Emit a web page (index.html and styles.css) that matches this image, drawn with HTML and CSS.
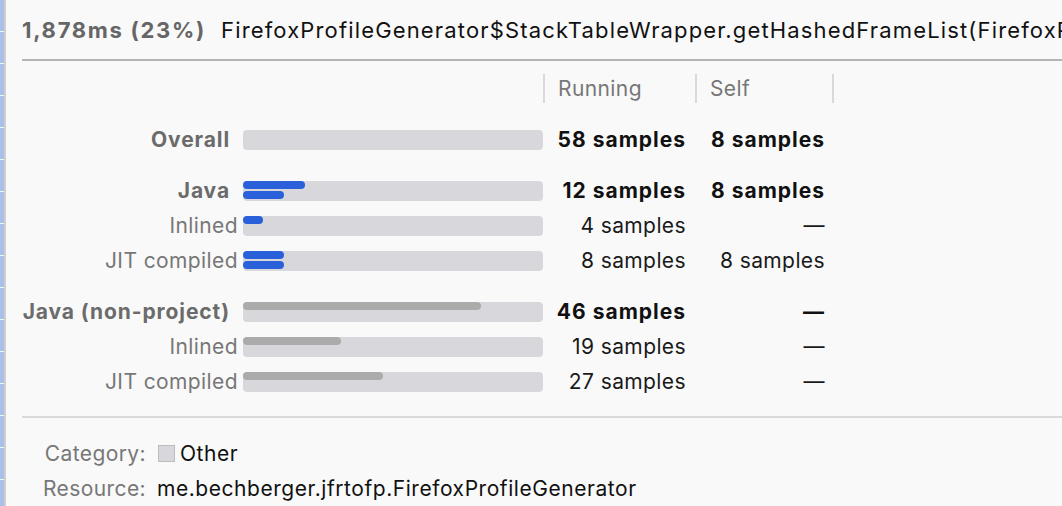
FILE: index.html
```html
<!DOCTYPE html>
<html>
<head>
<meta charset="utf-8">
<link rel="stylesheet" href="styles.css">
</head>
<body>
<div class="strip"></div>
<div class="panel">
  <div class="title">
    <span class="title-time">1,878ms (23%)</span><span class="title-name">FirefoxProfileGenerator$StackTableWrapper.getHashedFrameList(FirefoxProfileGenerator.java)</span>
  </div>
  <div class="table">
    <div class="row head">
      <div></div>
      <div></div>
      <div class="hdr">Running</div>
      <div class="hdr hdr-last">Self</div>
    </div>

    <div class="group">
      <div class="row">
        <div class="label bold">Overall</div>
        <div class="bar"></div>
        <div class="val bold">58 samples</div>
        <div class="val bold">8 samples</div>
      </div>
    </div>

    <div class="group">
      <div class="row">
        <div class="label bold">Java</div>
        <div class="bar"><div class="sub top blue" style="width:62px"></div><div class="sub bot blue" style="width:41px"></div></div>
        <div class="val bold">12 samples</div>
        <div class="val bold">8 samples</div>
      </div>
      <div class="row">
        <div class="label">Inlined</div>
        <div class="bar"><div class="sub top blue" style="width:20px"></div></div>
        <div class="val">4 samples</div>
        <div class="val">—</div>
      </div>
      <div class="row">
        <div class="label">JIT compiled</div>
        <div class="bar"><div class="sub top blue" style="width:41px"></div><div class="sub bot blue" style="width:41px"></div></div>
        <div class="val">8 samples</div>
        <div class="val">8 samples</div>
      </div>
    </div>

    <div class="group">
      <div class="row">
        <div class="label bold">Java (non-project)</div>
        <div class="bar"><div class="sub top grey" style="width:238px"></div></div>
        <div class="val bold">46 samples</div>
        <div class="val bold">—</div>
      </div>
      <div class="row">
        <div class="label">Inlined</div>
        <div class="bar"><div class="sub top grey" style="width:98px"></div></div>
        <div class="val">19 samples</div>
        <div class="val">—</div>
      </div>
      <div class="row">
        <div class="label">JIT compiled</div>
        <div class="bar"><div class="sub top grey" style="width:140px"></div></div>
        <div class="val">27 samples</div>
        <div class="val">—</div>
      </div>
    </div>
  </div>
  <div class="details">
    <div class="dlabel">Category:</div>
    <div class="dval"><span class="swatch"></span>Other</div>
    <div class="dlabel">Resource:</div>
    <div class="dval">me.bechberger.jfrtofp.FirefoxProfileGenerator</div>
  </div>
</div>
</body>
</html>
```
FILE: styles.css
```css
html, body {
  margin: 0;
  padding: 0;
  height: 100%;
}
body {
  display: flex;
  background: #f9f9f9;
  font-family: Inter, "Noto Sans", sans-serif;
  font-size: 21px;
  letter-spacing: 0.4px;
  overflow: hidden;
}
.strip {
  width: 4px;
  flex: none;
  background: repeating-linear-gradient(to bottom, #a9c0e8 0, #a9c0e8 31px, #f0f4fb 31px, #f0f4fb 32px);
  border-right: 2px solid #cfcfcf;
}
.panel {
  flex: 1;
  min-width: 0;
  padding-left: 16px;
}
.title {
  height: 61px;
  box-sizing: border-box;
  padding-top: 17px;
  white-space: nowrap;
  overflow: hidden;
  border-bottom: 2px solid #b4b4b4;
  font-size: 22px;
  letter-spacing: 1.15px;
}
.title-time {
  font-weight: 700;
  color: #666;
  margin-right: 15px;
  letter-spacing: 1.7px;
}
.title-name {
  color: #111;
}
.table {
  display: flex;
  flex-direction: column;
  gap: 16px;
  margin-top: 13px;
}
.group {
  display: flex;
  flex-direction: column;
}
.row {
  display: grid;
  grid-template-columns: 221px 300px 152px 139px;
  height: 35px;
  align-items: center;
}
.row.head {
  height: 29px;
  margin-bottom: 3px;
}
.hdr {
  height: 29px;
  border-left: 2px solid #d9d9d9;
  padding-left: 13px;
  color: #777;
  line-height: 29px;
}
.hdr-last {
  border-right: 2px solid #d9d9d9;
}
.label {
  text-align: right;
  padding-right: 5px;
  color: #777;
  white-space: nowrap;
}
.label.bold {
  font-weight: 700;
  color: #6b6b6b;
  padding-right: 13px;
  letter-spacing: 0.9px;
}
.bar {
  position: relative;
  width: 300px;
  height: 20px;
  background: #d8d8dc;
  border-radius: 4px;
}
.sub {
  position: absolute;
  left: 0;
  height: 8px;
  border-radius: 4px;
}
.sub.top { top: 0; }
.sub.bot { top: 10px; }
.blue { background: #2a60d9; }
.grey { background: #ababab; }
.val {
  text-align: right;
  padding-right: 9px;
  color: #1a1a1a;
  white-space: nowrap;
}
.val.bold {
  font-weight: 700;
  color: #111;
  letter-spacing: 1px;
}
.details {
  margin-top: 17px;
  border-top: 2px solid #dadada;
  padding-top: 18px;
  display: grid;
  grid-template-columns: 124px auto;
  grid-auto-rows: 35px;
  column-gap: 11px;
  align-items: center;
}
.dlabel {
  text-align: right;
  color: #777;
}
.dval {
  color: #111;
  display: flex;
  align-items: center;
  white-space: nowrap;
  letter-spacing: 0.55px;
}
.swatch {
  width: 15px;
  height: 15px;
  background: #d8d8dc;
  border: 1px solid #bdbdbd;
  margin-right: 5px;
  margin-left: 1px;
}
```
